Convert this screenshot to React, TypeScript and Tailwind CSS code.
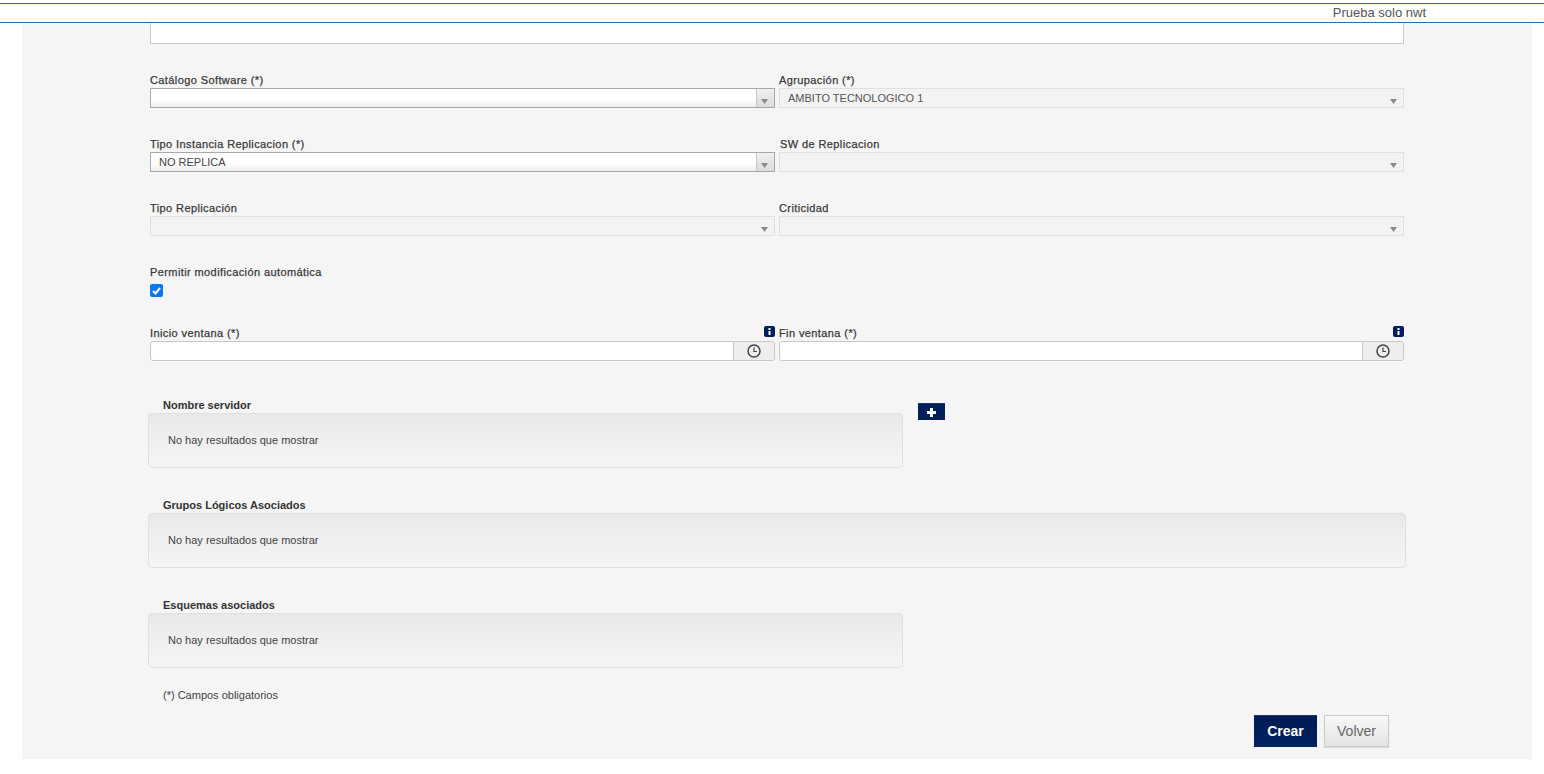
import React from 'react';

const labelClass = 'block h-4 text-[11px] leading-4 font-normal text-[#333] tracking-[0.4px] [-webkit-text-stroke:0.25px_#444]';

function Arrow() {
  return (
    <svg width="7" height="6" viewBox="0 0 7 6" className="absolute right-[6px] bottom-[3px]">
      <path d="M0 1h7L3.5 6z" fill="#8a8a8a" />
    </svg>
  );
}

function Combo({ label, value, disabled, inset }: { label: string; value?: string; disabled?: boolean; inset?: boolean }) {
  return (
    <div className="h-[64px]">
      <label className={inset ? labelClass + ' pl-px' : labelClass}>{label}</label>
      {disabled ? (
        <div className="relative h-5 border border-[#e0e0e0] bg-[#f3f3f3] pl-2 text-[11px] leading-[18px] text-[#555]">
          {value}
          <Arrow />
        </div>
      ) : (
        <div className="relative flex h-5 border border-[#a9a9a9] bg-gradient-to-b from-white from-60% to-[#ececec]">
          <div className="flex-1 pl-2 text-[11px] leading-[18px] text-[#444]">{value}</div>
          <div className="w-[18px] border-l border-[#c4c4c4] bg-gradient-to-b from-[#f0f0f0] to-[#dcdcdc]" />
          <Arrow />
        </div>
      )}
    </div>
  );
}

function TimeField({ label }: { label: string }) {
  return (
    <div className="relative">
      <label className={labelClass}>{label}</label>
      <svg width="11" height="11" viewBox="0 0 11 11" className="absolute right-0 top-[1px]">
        <rect width="11" height="11" rx="2" fill="#001f5b" />
        <rect x="4.5" y="2" width="2" height="2" fill="#fff" />
        <rect x="4.5" y="5" width="2" height="4" fill="#fff" />
      </svg>
      <div className="flex h-5 rounded-[3px] border border-[#c8c8c8] bg-white">
        <div className="flex-1" />
        <div className="flex w-[41px] items-center justify-center rounded-r-[3px] border-l border-[#c8c8c8] bg-[#eeeeee]">
          <svg width="14" height="14" viewBox="0 0 14 14" fill="none" stroke="#444" strokeWidth="1.5">
            <circle cx="7" cy="7" r="6" />
            <path d="M7 3.5V7.5H10" strokeWidth="1.2" />
          </svg>
        </div>
      </div>
    </div>
  );
}

function ResultBox({ label, wide, children }: { label: string; wide?: boolean; children?: React.ReactNode }) {
  return (
    <div className="ml-[-2px] flex items-start">
      <div className={wide ? 'w-[1258px]' : 'w-[755px]'}>
        <div className="h-4 pl-[15px] text-[11px] leading-4 font-bold text-[#333]">{label}</div>
        <div className="h-[55px] rounded-[4px] border border-[#e0e0e0] bg-gradient-to-b from-[#e9e9e9] to-[#f5f5f5] pl-[19px] text-[11px] leading-[53px] text-[#444]">
          No hay resultados que mostrar
        </div>
      </div>
      {children}
    </div>
  );
}

export default function App() {
  return (
    <div className="h-[774px] overflow-hidden bg-white font-['Liberation_Sans',Arial,sans-serif]">
      <div className="pt-[3px]">
        <div className="h-5 border-y border-[#2a6fb0] pr-[118px] text-right text-[13px] leading-[18px] text-[#555]">
          Prueba solo nwt
        </div>
      </div>
      <div className="ml-[22px] h-[736px] w-[1510px] bg-[#f5f5f5] pl-[128px]">
        <div className="h-[21px] w-[1254px] border-x border-b border-[#cccccc] bg-white" />
        <div className="mt-[28px] grid w-[1254px] grid-cols-2 gap-x-1">
          <Combo label="Catálogo Software (*)" />
          <Combo label="Agrupación (*)" value="AMBITO TECNOLOGICO 1" disabled />
          <Combo label="Tipo Instancia Replicacion (*)" value="NO REPLICA" />
          <Combo label="SW de Replicacion" disabled inset />
          <Combo label="Tipo Replicación" disabled />
          <Combo label="Criticidad" disabled />
        </div>
        <label className={labelClass}>Permitir modificación automática</label>
        <div className="mt-1 flex h-[13px] w-[13px] items-center justify-center rounded-[2px] bg-[#0b76ef]">
          <svg width="9" height="8" viewBox="0 0 9 8" fill="none" stroke="#fff" strokeWidth="2">
            <path d="M1 4l2.5 2.5L8 1" />
          </svg>
        </div>
        <div className="mt-[28px] grid w-[1254px] grid-cols-2 gap-x-1">
          <TimeField label="Inicio ventana (*)" />
          <TimeField label="Fin ventana (*)" />
        </div>
        <div className="mt-[36px] flex flex-col gap-[29px]">
          <ResultBox label="Nombre servidor">
            <button className="mt-[6px] ml-[15px] flex h-[17px] w-[27px] items-center justify-center border-t border-[#1c3a78] bg-[#001f5b]">
              <svg width="9" height="9" viewBox="0 0 9 9" fill="#fff">
                <path d="M3 0h3v3h3v3H6v3H3V6H0V3h3z" />
              </svg>
            </button>
          </ResultBox>
          <ResultBox label="Grupos Lógicos Asociados" wide />
          <ResultBox label="Esquemas asociados" />
        </div>
        <div className="mt-[19px] pl-[13px] text-[11px] leading-4 text-[#444]">(*) Campos obligatorios</div>
        <div className="mt-[12px] flex w-[1239px] justify-end gap-[7px]">
          <button className="h-8 w-[63px] border-t border-[#1c3a78] bg-gradient-to-b from-[#001b54] to-[#00225f] pb-px text-sm font-bold text-white">
            Crear
          </button>
          <button className="h-8 w-[65px] border border-[#cccccc] bg-gradient-to-b from-[#f8f8f8] to-[#e4e4e4] text-sm text-[#666] shadow-[0_1px_1px_rgba(0,0,0,0.1)]">
            Volver
          </button>
        </div>
      </div>
    </div>
  );
}
